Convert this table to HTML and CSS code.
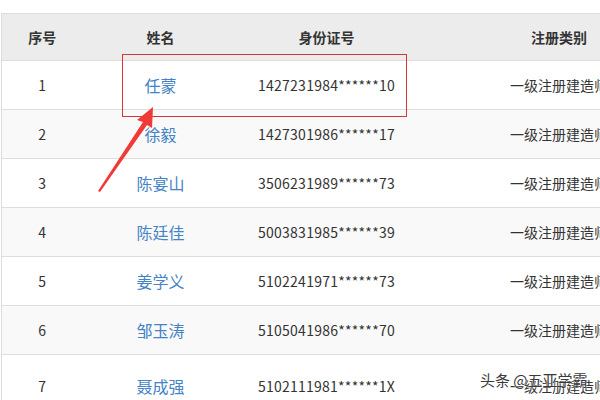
FILE: index.html
```html
<!DOCTYPE html>
<html lang="zh">
<head>
<meta charset="utf-8">
<link rel="stylesheet" href="styles.css">
</head>
<body>
<div class="page">
  <table class="grid">
    <colgroup>
      <col class="c1"><col class="c2"><col class="c3"><col class="c4">
    </colgroup>
    <thead>
      <tr><th>序号</th><th>姓名</th><th>身份证号</th><th>注册类别</th></tr>
    </thead>
    <tbody>
      <tr><td>1</td><td><a class="name">任蒙</a></td><td class="id">1427231984******10</td><td>一级注册建造师</td></tr>
      <tr class="alt"><td>2</td><td><a class="name">徐毅</a></td><td class="id">1427301986******17</td><td>一级注册建造师</td></tr>
      <tr><td>3</td><td><a class="name">陈宴山</a></td><td class="id">3506231989******73</td><td>一级注册建造师</td></tr>
      <tr class="alt"><td>4</td><td><a class="name">陈廷佳</a></td><td class="id">5003831985******39</td><td>一级注册建造师</td></tr>
      <tr><td>5</td><td><a class="name">姜学义</a></td><td class="id">5102241971******73</td><td>一级注册建造师</td></tr>
      <tr class="alt"><td>6</td><td><a class="name">邹玉涛</a></td><td class="id">5105041986******70</td><td>一级注册建造师</td></tr>
      <tr class="tall"><td>7</td><td><a class="name">聂成强</a></td><td class="id">5102111981******1X</td><td>一级注册建造师</td></tr>
    </tbody>
  </table>
  <div class="highlight"></div>
  <svg class="arrow" width="70" height="100" viewBox="0 0 70 100">
    <polygon points="62,7 61,28 56,25 9,92 7,91 52,22 46,20" fill="#f03a36"/>
  </svg>
  <div class="watermark">头条 @五亚学霸</div>
</div>
</body>
</html>
```
FILE: styles.css
```css
html, body {
  margin: 0;
  padding: 0;
  background: #ffffff;
}
.page {
  position: relative;
  width: 600px;
  height: 400px;
  overflow: hidden;
  padding: 13px 0 0 1px;
  box-sizing: border-box;
  font-family: "Noto Sans CJK SC", "Microsoft YaHei", sans-serif;
  color: #333333;
}
.grid {
  border-collapse: collapse;
  table-layout: fixed;
  width: 702px;
  font-size: 14px;
}
.c1 { width: 81px; }
.c2 { width: 156px; }
.c3 { width: 176px; }
.c4 { width: 289px; }
.grid th, .grid td {
  text-align: center;
  padding: 0;
  border-top: 1px solid #dddddd;
  border-left: 1px solid #dddddd;
  white-space: nowrap;
}
.grid th + th, .grid td + td {
  border-left: none;
}
.grid th {
  height: 46px;
  background: #ececec;
  font-weight: bold;
  color: #333333;
}
.grid td {
  height: 48px;
}
.grid td.id {
  letter-spacing: 0.25px;
}
.grid tr.alt td {
  background: #f9f9f9;
}
.grid tr.tall td {
  height: 62px;
}
.name {
  color: #4383c6;
  font-size: 16px;
  text-decoration: none;
}
.highlight {
  position: absolute;
  left: 122px;
  top: 54px;
  width: 283px;
  height: 61px;
  border: 1px solid #d9343b;
}
.arrow {
  position: absolute;
  left: 91px;
  top: 100px;
}
.watermark {
  position: absolute;
  left: 480px;
  top: 369px;
  font-size: 15px;
  color: #3a3a3a;
  text-shadow: 0 0 2px #ffffff, 0 0 1px #ffffff;
}
```
